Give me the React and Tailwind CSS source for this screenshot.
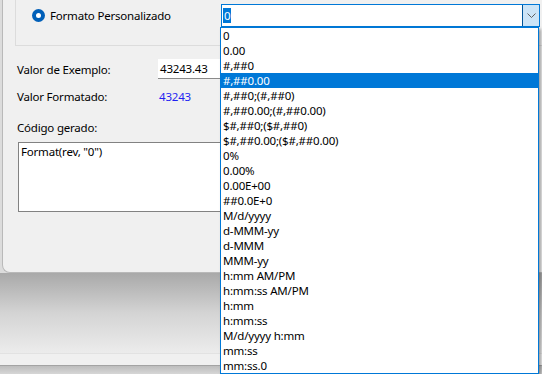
const formats = [
  "0",
  "0.00",
  "#,##0",
  "#,##0.00",
  "#,##0;(#,##0)",
  "#,##0.00;(#,##0.00)",
  "$#,##0;($#,##0)",
  "$#,##0.00;($#,##0.00)",
  "0%",
  "0.00%",
  "0.00E+00",
  "##0.0E+0",
  "M/d/yyyy",
  "d-MMM-yy",
  "d-MMM",
  "MMM-yy",
  "h:mm AM/PM",
  "h:mm:ss AM/PM",
  "h:mm",
  "h:mm:ss",
  "M/d/yyyy h:mm",
  "mm:ss",
  "mm:ss.0",
];

const selected = 3;

function Radio() {
  return (
    <span className="flex items-center justify-center w-[13px] h-[13px] rounded-full bg-[#005fb8]">
      <span className="w-[5px] h-[5px] rounded-full bg-white" />
    </span>
  );
}

function Combo() {
  return (
    <div className="flex w-[319px] h-[23px] mt-[4px] bg-white border border-[#0078d7]">
      <div className="flex-1 flex items-center pl-[1px]">
        <span className="bg-[#0078d7] text-white leading-[15px] px-px">0</span>
      </div>
      <div className="flex items-center justify-center w-[17px] bg-[#cce4f7] border-l border-[#005499]">
        <svg width="9" height="5" viewBox="0 0 9 5">
          <path d="M0.5 0.5 L4.5 4.5 L8.5 0.5" fill="none" stroke="#606060" strokeWidth="1" />
        </svg>
      </div>
    </div>
  );
}

export default function App() {
  return (
    <div
      className="relative w-[542px] h-[374px] overflow-hidden bg-[#dcdcdc] flex flex-col text-[11.5px] leading-[15px] tracking-[-0.2px] text-black"
      style={{ fontFamily: '"Segoe UI", "Noto Sans", sans-serif' }}
    >
      {/* dialog */}
      <div className="ml-[2px] h-[273px] bg-[#f0f0f0] border-l border-b border-[#b9b9b9] rounded-bl-[8px] pl-[12px]">
        <div className="flex h-[46px] w-[540px] border-l border-b border-[#dcdcdc]">
          <div className="flex items-start w-[205px] pl-[16px] pt-[9px]">
            <Radio />
            <span className="ml-[5px] leading-[13px]">Formato Personalizado</span>
          </div>
          <Combo />
        </div>

        <div className="flex flex-col pl-[2px]">
          <div className="flex items-center h-[20px] mt-[13px]">
            <span className="w-[141px]">Valor de Exemplo:</span>
            <div className="flex items-center w-[120px] h-[20px] bg-white border-b border-[#8a8a8a] pl-[2px]">
              43243.43
            </div>
          </div>
          <div className="flex items-center h-[16px] mt-[9px]">
            <span className="w-[142px]">Valor Formatado:</span>
            <span className="text-[#1f1ff2]">43243</span>
          </div>
          <div className="flex items-center h-[16px] mt-[15px]">Código gerado:</div>
          <div className="mt-[7px] ml-px w-[300px] h-[70px] bg-white border border-[#828282] px-[2px] pt-[1px]">
            Format(rev, "0")
          </div>
        </div>
      </div>

      {/* window behind */}
      <div className="h-[80px] bg-gradient-to-b from-[#a9a9a9] via-[#d4d4d4] to-[#ececec]" />
      <div className="h-[12px] bg-[#f0f0f0] border-t border-[#e2e2e2]" />
      <div className="flex-1 bg-gradient-to-b from-[#bdbdbd] to-[#d6d6d6] border-t border-[#a3a3a3]" />

      {/* open dropdown list */}
      <ul className="absolute left-[220px] top-[27px] w-[319px] h-[347px] bg-white border border-[#0078d7] shadow-[2px_2px_3px_rgba(0,0,0,0.35)]">
        {formats.map((f, i) => (
          <li
            key={f}
            className={`h-[15px] leading-[15px] pl-[2px] whitespace-nowrap ${
              i === selected ? "bg-[#0078d7] text-white" : ""
            }`}
          >
            {f}
          </li>
        ))}
      </ul>
    </div>
  );
}
